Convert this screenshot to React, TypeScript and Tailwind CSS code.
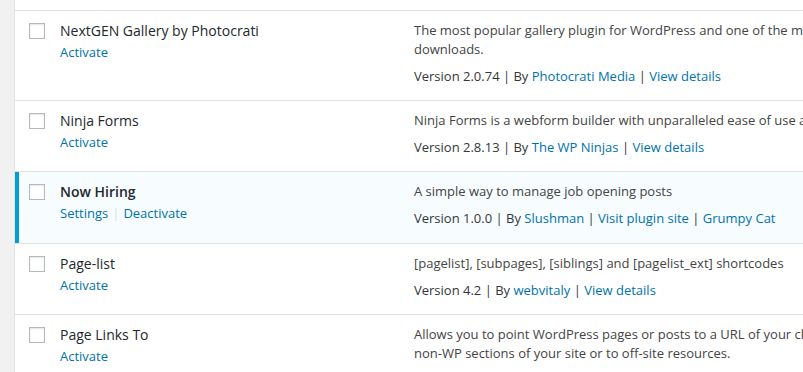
import type { ReactNode } from "react";

type Plugin = {
  name: string;
  active?: boolean;
  actions: string[];
  desc: string[];
  version: string;
  author: string;
  links: string[];
};

const plugins: Plugin[] = [
  {
    name: "NextGEN Gallery by Photocrati",
    actions: ["Activate"],
    desc: [
      "The most popular gallery plugin for WordPress and one of the most popular plugins of all time with over 16 million",
      "downloads.",
    ],
    version: "2.0.74",
    author: "Photocrati Media",
    links: ["View details"],
  },
  {
    name: "Ninja Forms",
    actions: ["Activate"],
    desc: [
      "Ninja Forms is a webform builder with unparalleled ease of use and features.",
    ],
    version: "2.8.13",
    author: "The WP Ninjas",
    links: ["View details"],
  },
  {
    name: "Now Hiring",
    active: true,
    actions: ["Settings", "Deactivate"],
    desc: ["A simple way to manage job opening posts"],
    version: "1.0.0",
    author: "Slushman",
    links: ["Visit plugin site", "Grumpy Cat"],
  },
  {
    name: "Page-list",
    actions: ["Activate"],
    desc: ["[pagelist], [subpages], [siblings] and [pagelist_ext] shortcodes"],
    version: "4.2",
    author: "webvitaly",
    links: ["View details"],
  },
  {
    name: "Page Links To",
    actions: ["Activate"],
    desc: [
      "Allows you to point WordPress pages or posts to a URL of your choosing. Good for pointing to",
      "non-WP sections of your site or to off-site resources.",
    ],
    version: "2.9.6",
    author: "Mark Jaquith",
    links: ["View details"],
  },
];

const Link = ({ children }: { children: ReactNode }) => (
  <a className="text-[#0073aa] cursor-pointer">{children}</a>
);

const PluginRow = ({ p }: { p: Plugin }) => (
  <div
    className={`flex border-b border-[#e1e1e1] ${
      p.active ? "bg-[#f7fcfe]" : "bg-white"
    }`}
  >
    {/* columna del checkbox */}
    <div
      className={`w-[45px] shrink-0 border-l-4 pl-[10px] ${
        p.active ? "border-[#00a0d2]" : "border-transparent"
      }`}
    >
      <div className="mt-[12px] w-4 h-4 bg-white border border-[#b4b9be] shadow-[inset_0_1px_2px_rgba(0,0,0,0.1)]" />
    </div>
    {/* nombre y acciones */}
    <div className="w-[354px] shrink-0 pt-[10px]">
      <div
        className={`text-[14px] leading-[20px] text-[#23282d] ${
          p.active ? "font-semibold" : ""
        }`}
      >
        {p.name}
      </div>
      <div className="mt-[1px] text-[13px] leading-[20px] flex items-center">
        {p.actions.map((a, i) => (
          <span key={a} className="flex items-center">
            {i > 0 && <span className="text-[#ddd] mx-[4px]">|</span>}
            <Link>{a}</Link>
          </span>
        ))}
      </div>
    </div>
    {/* descripción */}
    <div
      className={`flex-1 pt-[10px] text-[13px] leading-[19px] whitespace-nowrap ${
        p.active ? "pb-[15px]" : "pb-[14px]"
      }`}
    >
      {p.desc.map((d) => (
        <div key={d} className="text-[#444]">
          {d}
        </div>
      ))}
      <div className="mt-[8px] text-[#32373c]">
        Version {p.version} | By <Link>{p.author}</Link>
        {p.links.map((l) => (
          <span key={l}>
            {" "}
            | <Link>{l}</Link>
          </span>
        ))}
      </div>
    </div>
  </div>
);

export default function App() {
  return (
    <div className="w-[803px] h-[372px] overflow-hidden bg-[#f1f1f1] pl-[14px] font-['Open_Sans',sans-serif]">
      <div className="h-full bg-white border-l border-[#e5e5e5]">
        <div className="h-[11px] bg-white border-b border-[#e1e1e1]" />
        {plugins.map((p) => (
          <PluginRow key={p.name} p={p} />
        ))}
      </div>
    </div>
  );
}
